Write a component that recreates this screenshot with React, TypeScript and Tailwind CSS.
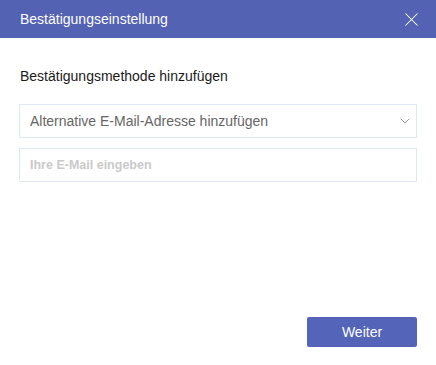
import { ChevronDown, X } from "lucide-react";

export default function App() {
  return (
    <div
      className="w-[436px] h-[365px] bg-white flex flex-col"
      style={{ fontFamily: '"Liberation Sans", Arial, sans-serif' }}
    >
      <div className="h-[38px] bg-[#5362b3] flex items-center justify-between pl-5 pr-[13px]">
        <span className="text-[14px] text-white">Bestätigungseinstellung</span>
        <X className="w-[23px] h-[23px] text-white" strokeWidth={1.1} />
      </div>

      <div className="flex-1 px-[19px]">
        <div className="mt-[28px] h-[20px] leading-[20px] text-[14px] text-[#1a1a1a] pl-px">
          Bestätigungsmethode hinzufügen
        </div>
        <div className="mt-[18px] h-[34px] border border-[#dfe8f6] flex items-center justify-between pl-[10px] pr-[3px]">
          <span className="text-[14px] text-[#666666]">
            Alternative E-Mail-Adresse hinzufügen
          </span>
          <ChevronDown className="w-[16px] h-[16px] text-[#8c8c8c]" strokeWidth={1.3} />
        </div>
        <div className="mt-[10px] h-[34px] border border-[#dfe8f6] flex items-center pl-[10px]">
          <span className="text-[12.5px] font-bold text-[#cacaca]">Ihre E-Mail eingeben</span>
        </div>
      </div>

      <div className="flex justify-end pr-[19px] pb-[18px]">
        <button className="w-[110px] h-[30px] bg-[#5364b9] rounded-[2px] text-white text-[14px]">
          Weiter
        </button>
      </div>
    </div>
  );
}
